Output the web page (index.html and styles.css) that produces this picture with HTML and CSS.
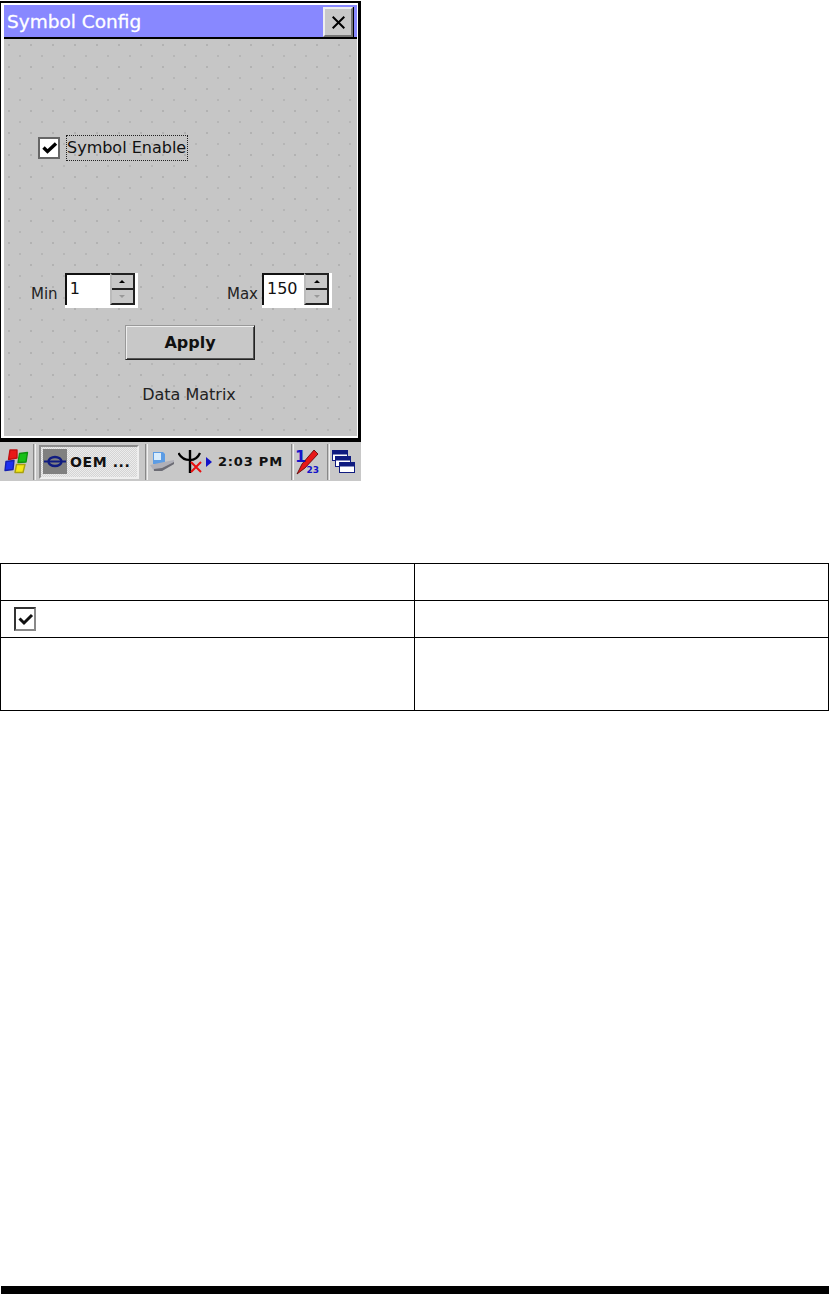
FILE: index.html
```html
<!DOCTYPE html>
<html lang="en">
<head>
<meta charset="utf-8">
<title>Symbol Config</title>
<link rel="stylesheet" href="styles.css">
</head>
<body>
<div class="page">
  <div class="device">
    <div class="window">
      <div class="titlebar">
        <span class="title">Symbol Config</span>
        <button class="close"><svg width="13" height="13" viewBox="0 0 13 13"><path d="M0.7 0.7 L12.3 12.3 M12.3 0.7 L0.7 12.3" stroke="#000" stroke-width="2" fill="none"/></svg></button>
      </div>
      <div class="client">
        <div class="check-row">
          <span class="checkbox"><svg width="18" height="18" viewBox="0 0 18 18"><path d="M3.5 8.5 L7.5 12.5 L16 4.5" stroke="#000" stroke-width="3.4" fill="none"/></svg></span>
          <span class="check-label">Symbol Enable</span>
        </div>
        <div class="range-row">
          <div class="range range-min">
            <span class="range-label">Min</span>
            <div class="spin spin-wide"><span class="spin-input">1</span><span class="spin-btns"><span class="spin-btn"><i class="up"></i></span><span class="spin-btn"><i class="down"></i></span></span></div>
          </div>
          <div class="range range-max">
            <span class="range-label">Max</span>
            <div class="spin"><span class="spin-input">150</span><span class="spin-btns"><span class="spin-btn"><i class="up"></i></span><span class="spin-btn"><i class="down"></i></span></span></div>
          </div>
        </div>
        <button class="apply">Apply</button>
        <div class="caption">Data Matrix</div>
      </div>
    </div>
    <div class="taskbar">
      <svg class="start" width="25" height="25" viewBox="0 0 25 25">
        <g stroke-linejoin="round" stroke-width="1.4">
          <path d="M6 1 L13 1 L13 9 L4.5 10.5 Z" fill="#e81818" stroke="#c01010"/>
          <path d="M15.5 4.5 L23.5 3.5 L22 13 L14 13.5 Z" fill="#18c018" stroke="#109010"/>
          <path d="M2 12.5 L10 11.5 L9 20.5 L1 21.5 Z" fill="#1c30f0" stroke="#1420b0"/>
          <path d="M12.5 15.5 L21 15.5 L19 23.5 L11 23.5 Z" fill="#f4e818" stroke="#a8a010"/>
        </g>
      </svg>
      <span class="sep"></span>
      <div class="task">
        <span class="task-icon"><svg width="24" height="25" viewBox="0 0 24 25"><path d="M1 12.5 H23" stroke="#101c80" stroke-width="2"/><ellipse cx="12" cy="12.5" rx="6.5" ry="4.5" fill="none" stroke="#101c80" stroke-width="2.4"/></svg></span>
        <span class="task-text">OEM ...</span>
      </div>
      <span class="sep"></span>
      <svg class="tray-pc" width="24" height="21" viewBox="0 0 24 21">
        <path d="M3 1 H13 L15 3 V13 H3 Z" fill="#5c9ce4"/>
        <path d="M4 2 H11 V9 H4 Z" fill="#d8ecfc"/>
        <path d="M0 14 L14 11 L24 9 V13 L12 20 H4 Z" fill="#b0b0b8"/>
        <path d="M4 18 L12 17 L24 11 V13 L12 20 H4 Z" fill="#6c6c74"/>
      </svg>
      <svg class="tray-ant" width="24" height="23" viewBox="0 0 24 23">
        <path d="M12 0 V23" stroke="#000" stroke-width="2.4"/>
        <path d="M0.5 3 Q4 10 12 10 Q19 10 22 3" stroke="#000" stroke-width="2.2" fill="none"/>
        <path d="M13 12 L23 22 M23 12 L13 22" stroke="#e81010" stroke-width="2"/>
      </svg>
      <svg class="tray-arrow" width="6" height="10" viewBox="0 0 6 10"><path d="M0 0 L6 5 L0 10 Z" fill="#1414c8"/></svg>
      <span class="clock">2:03 PM</span>
      <span class="sep"></span>
      <div class="sip">
        <svg width="24" height="26" viewBox="0 0 24 26">
          <path d="M19 1 L7 15 L2 25 L10 19 L23 5 Z" fill="#e81818" stroke="#500" stroke-width="0.8"/>
        </svg>
        <span class="sip-one">1</span>
        <span class="sip-nums">23</span>
      </div>
      <span class="sep sep-last"></span>
      <svg class="tray-win" width="23" height="23" viewBox="0 0 23 23">
        <rect x="0.5" y="0.5" width="15" height="10" fill="#fff" stroke="#101c80"/><rect x="0.5" y="0.5" width="15" height="4" fill="#101c80"/>
        <rect x="3.5" y="6.5" width="15" height="10" fill="#fff" stroke="#101c80"/><rect x="3.5" y="6.5" width="15" height="4" fill="#101c80"/>
        <rect x="7.5" y="12.5" width="15" height="10" fill="#fff" stroke="#101c80"/><rect x="7.5" y="12.5" width="15" height="4" fill="#101c80"/>
      </svg>
    </div>
  </div>

  <table class="info">
    <tr class="r1"><td></td><td></td></tr>
    <tr class="r2"><td><span class="mini-check"><svg width="18" height="20" viewBox="0 0 18 20"><path d="M3.5 9.5 L8 14 L16 6" stroke="#111" stroke-width="3" fill="none"/></svg></span></td><td></td></tr>
    <tr class="r3"><td></td><td></td></tr>
  </table>

  <div class="footer-rule"></div>
</div>
</body>
</html>
```

FILE: styles.css
```css
* { box-sizing: border-box; }
html, body { margin: 0; padding: 0; background: #fff; }
.page { width: 829px; height: 1294px; display: flex; flex-direction: column; overflow: hidden; }

.device { width: 361px; height: 481px; display: flex; flex-direction: column; background: #fff; font-family: "DejaVu Sans", sans-serif; flex: none; }
.window { height: 441px; margin-top: 1px; border-style: solid; border-color: #000; border-width: 2px 3px 4px 1px; display: flex; flex-direction: column; background: #fff; padding: 2px 1px 2px 3px; flex: none; }

.titlebar { height: 34px; background: #8888ff; display: flex; align-items: flex-end; justify-content: space-between; border-bottom: 2px solid #000; padding: 0 4px 0 3px; flex: none; }
.title { color: #fff; font-size: 18.5px; align-self: center; -webkit-text-stroke: 0.3px #fff; white-space: nowrap; }
.close { width: 30px; height: 30px; padding: 0; margin: 0; background: #c8c8c8; border: 2px solid; border-color: #eee #777 #777 #eee; box-shadow: 1px 0 #000; display: flex; align-items: center; justify-content: center; }

.client { flex: 1; background-color: #c6c6c6; background-image: radial-gradient(circle at 1px 1px, #b2b2b2 0.8px, transparent 1px), radial-gradient(circle at 1px 1px, #b6b6b6 0.8px, transparent 1px); background-size: 22px 22px; background-position: 4px 5px, 15px 16px; display: flex; flex-direction: column; align-items: center; }

.check-row { display: flex; align-items: center; align-self: flex-start; margin: 96px 0 0 34px; gap: 6px; }
.checkbox { width: 22px; height: 22px; background: #fff; border: 2px solid #666; display: flex; align-items: center; justify-content: center; }
.check-label { font-size: 16px; color: #111; border: 1px dotted #222; padding: 2px 0 3px; width: 122px; white-space: nowrap; line-height: 19px; }

.range-row { align-self: stretch; display: flex; justify-content: space-between; margin: 112px 25px 0 27px; }
.range { display: flex; align-items: center; }
.range-min { gap: 7px; }
.range-max { gap: 4px; }
.range-label { font-size: 15px; color: #222; margin-top: 6px; }
.spin { display: flex; width: 70px; height: 35px; background: #fff; padding: 0 3px 3px 0; }
.spin-wide { width: 73px; }
.spin-input { flex: 1; border-left: 2px solid #111; border-top: 2px solid #111; font-size: 16px; line-height: 28px; color: #111; padding-left: 3px; background: #fff; }
.spin-btns { width: 25px; flex: none; display: flex; flex-direction: column; border: 2px solid #222; border-left-color: #bbb; }
.spin-btn { flex: 1; background: #c8c8c8; display: flex; align-items: center; justify-content: center; }
.spin-btn + .spin-btn { border-top: 2px solid #222; }
.spin-btn i { display: block; width: 0; height: 0; border-left: 3px solid transparent; border-right: 3px solid transparent; }
.up { border-bottom: 3px solid #000; }
.down { border-top: 3px solid #999; }

.apply { margin: 17px 0 0 19px; width: 130px; height: 35px; background: #c8c8c8; border: 1px solid; border-color: #999 #222 #222 #999; box-shadow: inset 1px 1px #eee, inset -1px -1px #555; font-family: "DejaVu Sans", sans-serif; font-size: 16px; font-weight: 700; color: #111; padding: 0; }
.caption { margin: 25px 0 0 17px; font-size: 16px; color: #222; }

.taskbar { flex: 1; display: flex; align-items: center; background: #c8c8c8; padding: 0 0 0 4px; }
.sep { width: 3px; height: 36px; border-left: 1px solid #888; border-right: 1px solid #f0f0f0; flex: none; }
.start { margin-right: 4px; flex: none; }
.task { width: 100px; height: 34px; margin: 0 6px 0 3px; background-color: #e0e0e0; background-image: conic-gradient(#d4d4d4 25%, #ececec 0 50%, #d4d4d4 0 75%, #ececec 0); background-size: 2px 2px; border: 2px solid #8c8c8c; border-right-color: #eee; border-bottom-color: #eee; display: flex; align-items: center; padding: 0 0 0 2px; flex: none; }
.task-icon { width: 24px; height: 25px; background: #808080; display: flex; align-items: center; justify-content: center; flex: none; }
.task-text { font-size: 14px; font-weight: 700; color: #111; margin-left: 3px; white-space: nowrap; letter-spacing: .6px; }
.tray-pc { margin-left: 2px; flex: none; }
.tray-ant { margin-left: 4px; flex: none; }
.tray-arrow { margin-left: 4px; flex: none; }
.clock { font-size: 13px; font-weight: 700; color: #111; width: 65px; margin-left: 6px; margin-right: 8px; white-space: nowrap; letter-spacing: .8px; flex: none; }
.sip { position: relative; width: 24px; height: 26px; margin-left: 1px; flex: none; }
.sip-one { position: absolute; left: 0; top: -2px; color: #1414c8; font-size: 16px; font-weight: 700; line-height: 20px; }
.sip-nums { position: absolute; right: 0; bottom: 0; color: #1414c8; font-size: 9px; font-weight: 700; line-height: 10px; }
.sep-last { margin-left: 8px; }
.tray-win { margin-left: 2px; flex: none; }

.info { margin-top: 82px; width: 829px; height: 148px; border-collapse: collapse; table-layout: fixed; flex: none; }
.info td { border: 1px solid #000; padding: 0; vertical-align: middle; }
.r1 td { height: 37px; }
.r2 td { height: 37px; }
.r3 td { height: 73px; }
.mini-check { display: flex; width: 22px; height: 24px; margin-left: 13px; background: #fff; border: 2px solid #333; border-right-color: #888; border-bottom-color: #888; align-items: center; justify-content: center; }

.footer-rule { margin-top: auto; height: 8px; background: #000; flex: none; margin-left: 1px; }
```
